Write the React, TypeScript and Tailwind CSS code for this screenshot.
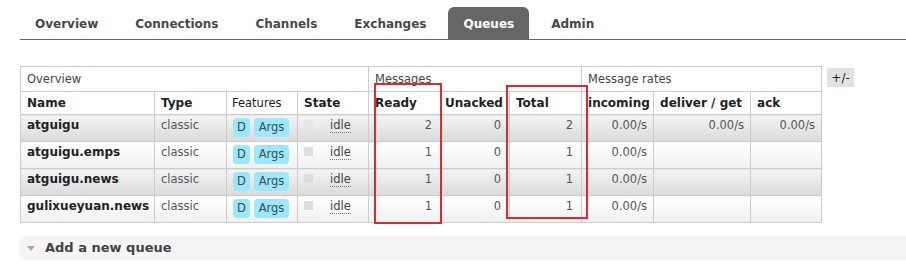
import React from "react";

const alt1 = "bg-linear-to-b from-[#f4f4f4] to-[#dadada]";
const alt2 = "bg-linear-to-b from-[#ffffff] to-[#f0f0f0]";

type Row = { name: string; ready: number; unacked: number; total: number; rates: string[] };

const rows: Row[] = [
  { name: "atguigu", ready: 2, unacked: 0, total: 2, rates: ["0.00/s", "0.00/s", "0.00/s"] },
  { name: "atguigu.emps", ready: 1, unacked: 0, total: 1, rates: ["0.00/s", "", ""] },
  { name: "atguigu.news", ready: 1, unacked: 0, total: 1, rates: ["0.00/s", "", ""] },
  { name: "gulixueyuan.news", ready: 1, unacked: 0, total: 1, rates: ["0.00/s", "", ""] },
];

const tabs = ["Overview", "Connections", "Channels", "Exchanges", "Queues", "Admin"];

export default function App() {
  const td = "border border-[#cccccc] h-[27px] align-top pt-[3px] leading-[15px]";
  const th = "border border-[#cccccc] text-left px-[6px] leading-[15px]";
  return (
    <div className="relative w-[906px] h-[270px] bg-white font-['DejaVu_Sans',sans-serif] text-[#444]">
      {/* Tabs */}
      <div className="pt-[7px] ml-[20px]">
        <div className="flex items-end gap-[7px] border-b border-[#666] h-[33px]">
          {tabs.map((t) => (
            <div
              key={t}
              className={
                "h-[32px] px-[15px] pt-[1px] flex items-center text-[12px] font-bold rounded-t-[6px] " +
                (t === "Queues" ? "bg-[#666666] text-white" : "text-[#484848]")
              }
            >
              {t}
            </div>
          ))}
        </div>
      </div>

      {/* Table + toggle */}
      <div className="flex items-start gap-[5px] ml-[20px] mt-[26px]">
        <table className="table-fixed border-collapse w-[801px] text-[12px]">
          <colgroup>
            <col className="w-[134px]" />
            <col className="w-[72px]" />
            <col className="w-[71px]" />
            <col className="w-[71px]" />
            <col className="w-[72px]" />
            <col className="w-[69px]" />
            <col className="w-[72px]" />
            <col className="w-[72px]" />
            <col className="w-[97px]" />
            <col className="w-[71px]" />
          </colgroup>
          <thead>
            <tr>
              <th colSpan={4} className={th + " h-[25px] font-normal text-[11.5px] text-[#444]"}>Overview</th>
              <th colSpan={3} className={th + " h-[25px] font-normal text-[11.5px] text-[#444]"}>Messages</th>
              <th colSpan={3} className={th + " h-[25px] font-normal text-[11.5px] text-[#444]"}>Message rates</th>
            </tr>
            <tr className="text-[#222]">
              <th className={th + " h-[23px]"}>Name</th>
              <th className={th + " h-[23px]"}>Type</th>
              <th className={th + " h-[23px] font-normal text-[11.5px] pl-[5px]"}>Features</th>
              <th className={th + " h-[23px]"}>State</th>
              <th className={th + " h-[23px]"}>Ready</th>
              <th className={th + " h-[23px] pl-[4px]"}>Unacked</th>
              <th className={th + " h-[23px]"}>Total</th>
              <th className={th + " h-[23px]"}>incoming</th>
              <th className={th + " h-[23px]"}>deliver / get</th>
              <th className={th + " h-[23px]"}>ack</th>
            </tr>
          </thead>
          <tbody>
            {rows.map((r, i) => {
              const bg = i % 2 === 0 ? alt1 : alt2;
              return (
                <tr key={r.name}>
                  <td className={td + " " + bg + " px-[6px] font-bold text-[#222] whitespace-nowrap"}>{r.name}</td>
                  <td className={td + " " + bg + " px-[6px] text-[11.5px] text-[#555]"}>classic</td>
                  <td className={td + " " + bg + " px-[6px]"}>
                    <div className="flex gap-[4px] text-[11.5px] text-[#3a4a55]">
                      <span className="inline-flex items-center justify-center h-[19px] w-[17px] rounded-[4px] bg-[#9ce8fb]">D</span>
                      <span className="inline-flex items-center justify-center h-[19px] w-[35px] rounded-[4px] bg-[#9ce8fb]">Args</span>
                    </div>
                  </td>
                  <td className={td + " " + bg + " px-[6px]"}>
                    <div className="flex items-start">
                      <span className={"mt-[2px] w-[9px] h-[9px] " + (i === 0 ? "bg-[#e6e6e6]" : "bg-[#dddddd]")} />
                      <span className="ml-[17px] text-[11.5px] text-[#444] border-b border-dotted border-[#777] leading-[14px]">idle</span>
                    </div>
                  </td>
                  <td className={td + " " + bg + " text-right pr-[8px] text-[11.5px] text-[#555]"}>{r.ready}</td>
                  <td className={td + " " + bg + " text-right pr-[8px] text-[11.5px] text-[#555]"}>{r.unacked}</td>
                  <td className={td + " " + bg + " text-right pr-[8px] text-[11.5px] text-[#555]"}>{r.total}</td>
                  {r.rates.map((rate, j) => (
                    <td key={j} className={td + " " + bg + " text-right pr-[6px] text-[11.5px] text-[#555]"}>{rate}</td>
                  ))}
                </tr>
              );
            })}
          </tbody>
        </table>
        <div className="mt-[2px] w-[27px] h-[19px] bg-[#e2e2e2] flex items-center justify-center text-[12px] text-[#222]">
          +/-
        </div>
      </div>

      {/* Add a new queue */}
      <div className="ml-[20px] mt-[13px] h-[24px] bg-[#f5f5f5] flex items-center">
        <span className="ml-[7px] w-0 h-0 border-l-[4px] border-r-[4px] border-t-[5px] border-l-transparent border-r-transparent border-t-[#aaaaaa]" />
        <span className="ml-[10px] text-[13px] font-bold text-[#444]">Add a new queue</span>
      </div>

      {/* Red highlight boxes */}
      <div className="absolute left-[374px] top-[83px] w-[68px] h-[141px] border-2 border-[#dc2a30]" />
      <div className="absolute left-[506px] top-[85px] w-[82px] h-[134px] border-2 border-[#dc2a30]" />
    </div>
  );
}
